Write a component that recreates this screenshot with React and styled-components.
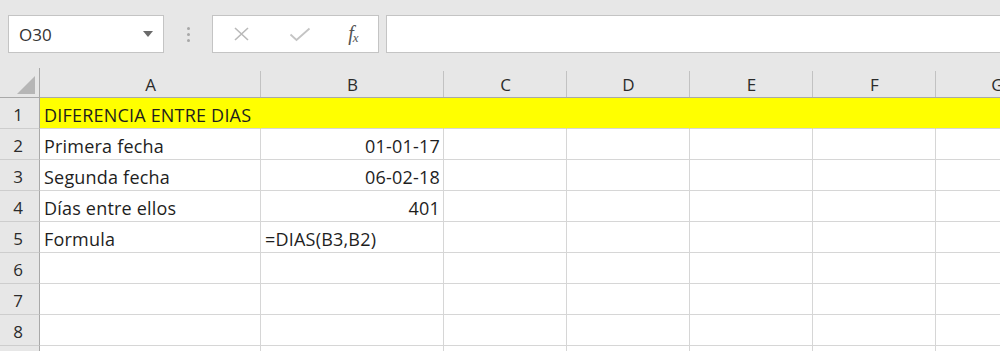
import React from "react";
import styled, { createGlobalStyle } from "styled-components";

const GlobalStyle = createGlobalStyle`
  html, body { margin: 0; padding: 0; background: #ffffff; }
  body { font-family: "Open Sans", Lato, sans-serif; overflow: hidden; }
`;

const Page = styled.div`
  width: 1000px;
  height: 351px;
  overflow: hidden;
  background: #ffffff;
`;

const Toolbar = styled.div`
  height: 68px;
  box-sizing: border-box;
  background: #e7e7e7;
  display: flex;
  align-items: flex-start;
  padding: 15px 0 0 8px;
`;

const Box = styled.div`
  height: 38px;
  box-sizing: border-box;
  background: #ffffff;
  border: 1px solid #c4c4c4;
  display: flex;
  align-items: center;
`;

const NameBox = styled(Box)`
  width: 156px;
  padding: 0 10px 0 10px;
  justify-content: space-between;
  font-size: 17px;
  color: #333;
`;

const Caret = styled.span`
  width: 0;
  height: 0;
  border-left: 5px solid transparent;
  border-right: 5px solid transparent;
  border-top: 6px solid #6a6a6a;
`;

const DotsWrap = styled.div`
  width: 48px;
  height: 38px;
  display: flex;
  flex-direction: column;
  align-items: center;
  justify-content: center;
  gap: 3px;
`;

const Dot = styled.span`
  width: 3px;
  height: 3px;
  border-radius: 50%;
  background: #a8a8a8;
`;

const FxBox = styled(Box)`
  width: 167px;
  padding: 0 0 0 20px;
`;

const IconSlot = styled.div`
  width: ${(p) => p.$w}px;
  display: flex;
  align-items: center;
`;

const FxLabel = styled.span`
  font-family: "Liberation Serif", serif;
  font-style: italic;
  font-size: 20px;
  color: #555;
  letter-spacing: -1px;
  sub {
    font-size: 13px;
    vertical-align: -2px;
  }
`;

const FormulaBar = styled(Box)`
  flex: 1;
  margin-left: 7px;
  border-right: none;
`;

const Sheet = styled.div`
  display: grid;
  width: max-content;
  grid-template-columns: 40px 221px 183px repeat(5, 123px);
  grid-template-rows: 30px;
  grid-auto-rows: 31px;
`;

const Corner = styled.div`
  background: #e7e7e7;
  border-right: 1px solid #a9a9a9;
  border-bottom: 1px solid #a9a9a9;
  box-sizing: border-box;
  display: flex;
  align-items: flex-end;
  justify-content: flex-end;
  padding: 0 4px 3px 0;
`;

const ColHead = styled.div`
  background: #e7e7e7;
  border-bottom: 1px solid #a9a9a9;
  box-sizing: border-box;
  position: relative;
  display: flex;
  align-items: center;
  justify-content: center;
  font-size: 17px;
  color: #2b2b2b;
  padding-top: 4px;
  &::after {
    content: "";
    position: absolute;
    right: 0;
    top: 3px;
    bottom: 0;
    width: 1px;
    background: #c2c2c2;
  }
`;

const RowHead = styled.div`
  background: #e7e7e7;
  border-right: 1px solid #a9a9a9;
  border-bottom: 1px solid #cdcdcd;
  box-sizing: border-box;
  display: flex;
  align-items: center;
  justify-content: center;
  font-size: 17px;
  color: #2b2b2b;
  padding: 3px 3px 0 0;
`;

const Cell = styled.div`
  box-sizing: border-box;
  border-bottom: 1px solid #d6d6d6;
  border-right: 1px solid ${(p) => (p.$fill ? p.$fill : "#d6d6d6")};
  background: ${(p) => p.$fill || "#ffffff"};
  display: flex;
  align-items: center;
  justify-content: ${(p) => (p.$right ? "flex-end" : "flex-start")};
  padding: 3px 3px 0 4px;
  font-size: 18px;
  letter-spacing: 0.2px;
  color: #1e1e1e;
  white-space: nowrap;
  position: relative;
  z-index: ${(p) => (p.$over ? 1 : 0)};
`;

const cols = ["A", "B", "C", "D", "E", "F", "G"];

const data = {
  1: { A: "DIFERENCIA ENTRE DIAS" },
  2: { A: "Primera fecha", B: "01-01-17" },
  3: { A: "Segunda fecha", B: "06-02-18" },
  4: { A: "Días entre ellos", B: "401" },
  5: { A: "Formula", B: "=DIAS(B3,B2)" },
};

const rightAligned = { 2: true, 3: true, 4: true };

export default function App() {
  const rows = [1, 2, 3, 4, 5, 6, 7, 8, 9];
  return (
    <Page>
      <GlobalStyle />
      <Toolbar>
        <NameBox>
          <span>O30</span>
          <Caret />
        </NameBox>
        <DotsWrap>
          <Dot />
          <Dot />
          <Dot />
        </DotsWrap>
        <FxBox>
          <IconSlot $w={56}>
            <svg width="17" height="14" viewBox="0 0 17 14">
              <path d="M2 1 L15 13 M15 1 L2 13" stroke="#b9b9b9" strokeWidth="1.6" fill="none" />
            </svg>
          </IconSlot>
          <IconSlot $w={60}>
            <svg width="22" height="15" viewBox="0 0 22 15">
              <path d="M1.5 7.5 L7.5 13 L20.5 1.5" stroke="#c4c4c4" strokeWidth="1.8" fill="none" />
            </svg>
          </IconSlot>
          <IconSlot $w={30}>
            <FxLabel>
              f<sub>x</sub>
            </FxLabel>
          </IconSlot>
        </FxBox>
        <FormulaBar />
      </Toolbar>
      <Sheet>
        <Corner>
          <svg width="18" height="18" viewBox="0 0 18 18">
            <path d="M18 0 L18 18 L0 18 Z" fill="#b6b6b6" />
          </svg>
        </Corner>
        {cols.map((c) => (
          <ColHead key={c}>{c}</ColHead>
        ))}
        {rows.map((r) => (
          <React.Fragment key={r}>
            <RowHead>{r < 9 ? r : ""}</RowHead>
            {cols.map((c) => {
              const v = data[r] && data[r][c];
              const fill = r === 1 ? "#ffff00" : undefined;
              return (
                <Cell
                  key={c}
                  $fill={fill}
                  $right={c === "B" && rightAligned[r]}
                  $over={!!v}
                >
                  {v}
                </Cell>
              );
            })}
          </React.Fragment>
        ))}
      </Sheet>
    </Page>
  );
}
